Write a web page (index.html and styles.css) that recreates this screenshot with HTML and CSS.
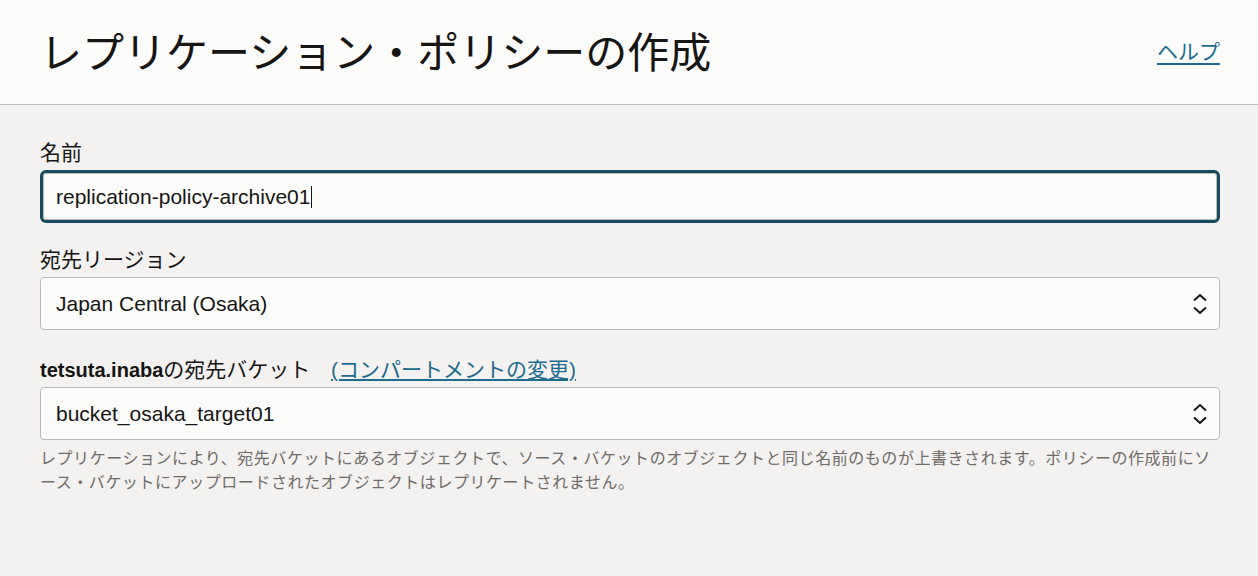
FILE: index.html
```html
<!DOCTYPE html>
<html lang="ja">
<head>
<meta charset="utf-8">
<link rel="stylesheet" href="styles.css">
</head>
<body>
<header class="header">
  <h1 class="title">レプリケーション・ポリシーの作成</h1>
  <a class="help" href="#">ヘルプ</a>
</header>
<main class="form">
  <div class="field">
    <label class="label">名前</label>
    <div class="input focused"><span>replication-policy-archive01</span><span class="caret"></span></div>
  </div>
  <div class="field">
    <label class="label">宛先リージョン</label>
    <div class="input select"><span>Japan Central (Osaka)</span>
      <svg class="chev" width="16" height="24" viewBox="0 0 16 24"><path d="M2 8.5 L8 3 L14 8.5 M2 15.5 L8 21 L14 15.5" fill="none" stroke="#161513" stroke-width="2"/></svg>
    </div>
  </div>
  <div class="field field-bucket">
    <label class="label"><b class="user">tetsuta.inaba</b>の宛先バケット <a class="link" href="#">(コンパートメントの変更)</a></label>
    <div class="input select"><span>bucket_osaka_target01</span>
      <svg class="chev" width="16" height="24" viewBox="0 0 16 24"><path d="M2 8.5 L8 3 L14 8.5 M2 15.5 L8 21 L14 15.5" fill="none" stroke="#161513" stroke-width="2"/></svg>
    </div>
    <p class="hint">レプリケーションにより、宛先バケットにあるオブジェクトで、ソース・バケットのオブジェクトと同じ名前のものが上書きされます。ポリシーの作成前にソース・バケットにアップロードされたオブジェクトはレプリケートされません。</p>
  </div>
</main>
</body>
</html>
```

FILE: styles.css
```css
html, body {
  margin: 0;
  padding: 0;
  background: #f3f2f1;
  font-family: "Liberation Sans", "Noto Sans CJK JP", sans-serif;
  color: #161513;
}
.header {
  background: #fcfcfb;
  border-bottom: 1px solid #c4c1bd;
  height: 104px;
  display: flex;
  align-items: center;
  justify-content: space-between;
  padding: 0 38px 0 40px;
}
.title {
  margin: 0;
  font-family: "Noto Sans CJK JP", sans-serif;
  font-weight: 400;
  font-size: 42px;
  line-height: 1;
  color: #161513;
  position: relative;
  top: -2px;
}
.help {
  font-family: "Noto Sans CJK JP", sans-serif;
  font-size: 21px;
  color: #1f6b8f;
  text-decoration: underline;
  text-decoration-thickness: 2px;
  text-underline-offset: 4px;
  position: relative;
  top: -2px;
}
.form {
  padding: 33px 38px 0 40px;
  display: flex;
  flex-direction: column;
  gap: 22px;
}
.field {
  display: flex;
  flex-direction: column;
}
.field-bucket {
  margin-top: 3px;
}
.label {
  font-family: "Noto Sans CJK JP", sans-serif;
  font-size: 21px;
  line-height: 26px;
  height: 26px;
  white-space: nowrap;
  margin-bottom: 6px;
  color: #161513;
}
.user {
  font-family: "Liberation Sans", sans-serif;
  font-weight: 700;
  font-size: 20px;
  line-height: 1;
}
.link {
  font-family: "Liberation Sans", "Noto Sans CJK JP", sans-serif;
  color: #1f6b8f;
  text-decoration: underline;
  margin-left: 16px;
  line-height: 1;
}
.input {
  box-sizing: border-box;
  height: 53px;
  background: #fcfcfb;
  border: 1px solid #bdbab6;
  border-radius: 4px;
  display: flex;
  align-items: center;
  padding: 0 15px;
  font-size: 21px;
  color: #161513;
}
.input.focused {
  border: 3px solid #164a61;
  border-radius: 6px;
  box-shadow: inset 0 0 0 1px #bdbab6;
  padding-left: 13px;
}
.caret {
  display: inline-block;
  width: 1px;
  height: 22px;
  background: #161513;
  margin-left: 1px;
}
.select {
  justify-content: space-between;
  padding-right: 11px;
}
.chev {
  display: block;
}
.hint {
  margin: 5px 0 0;
  font-family: "Noto Sans CJK JP", sans-serif;
  font-size: 16px;
  letter-spacing: 0.55px;
  line-height: 24px;
  color: #6f6b67;
}
```
